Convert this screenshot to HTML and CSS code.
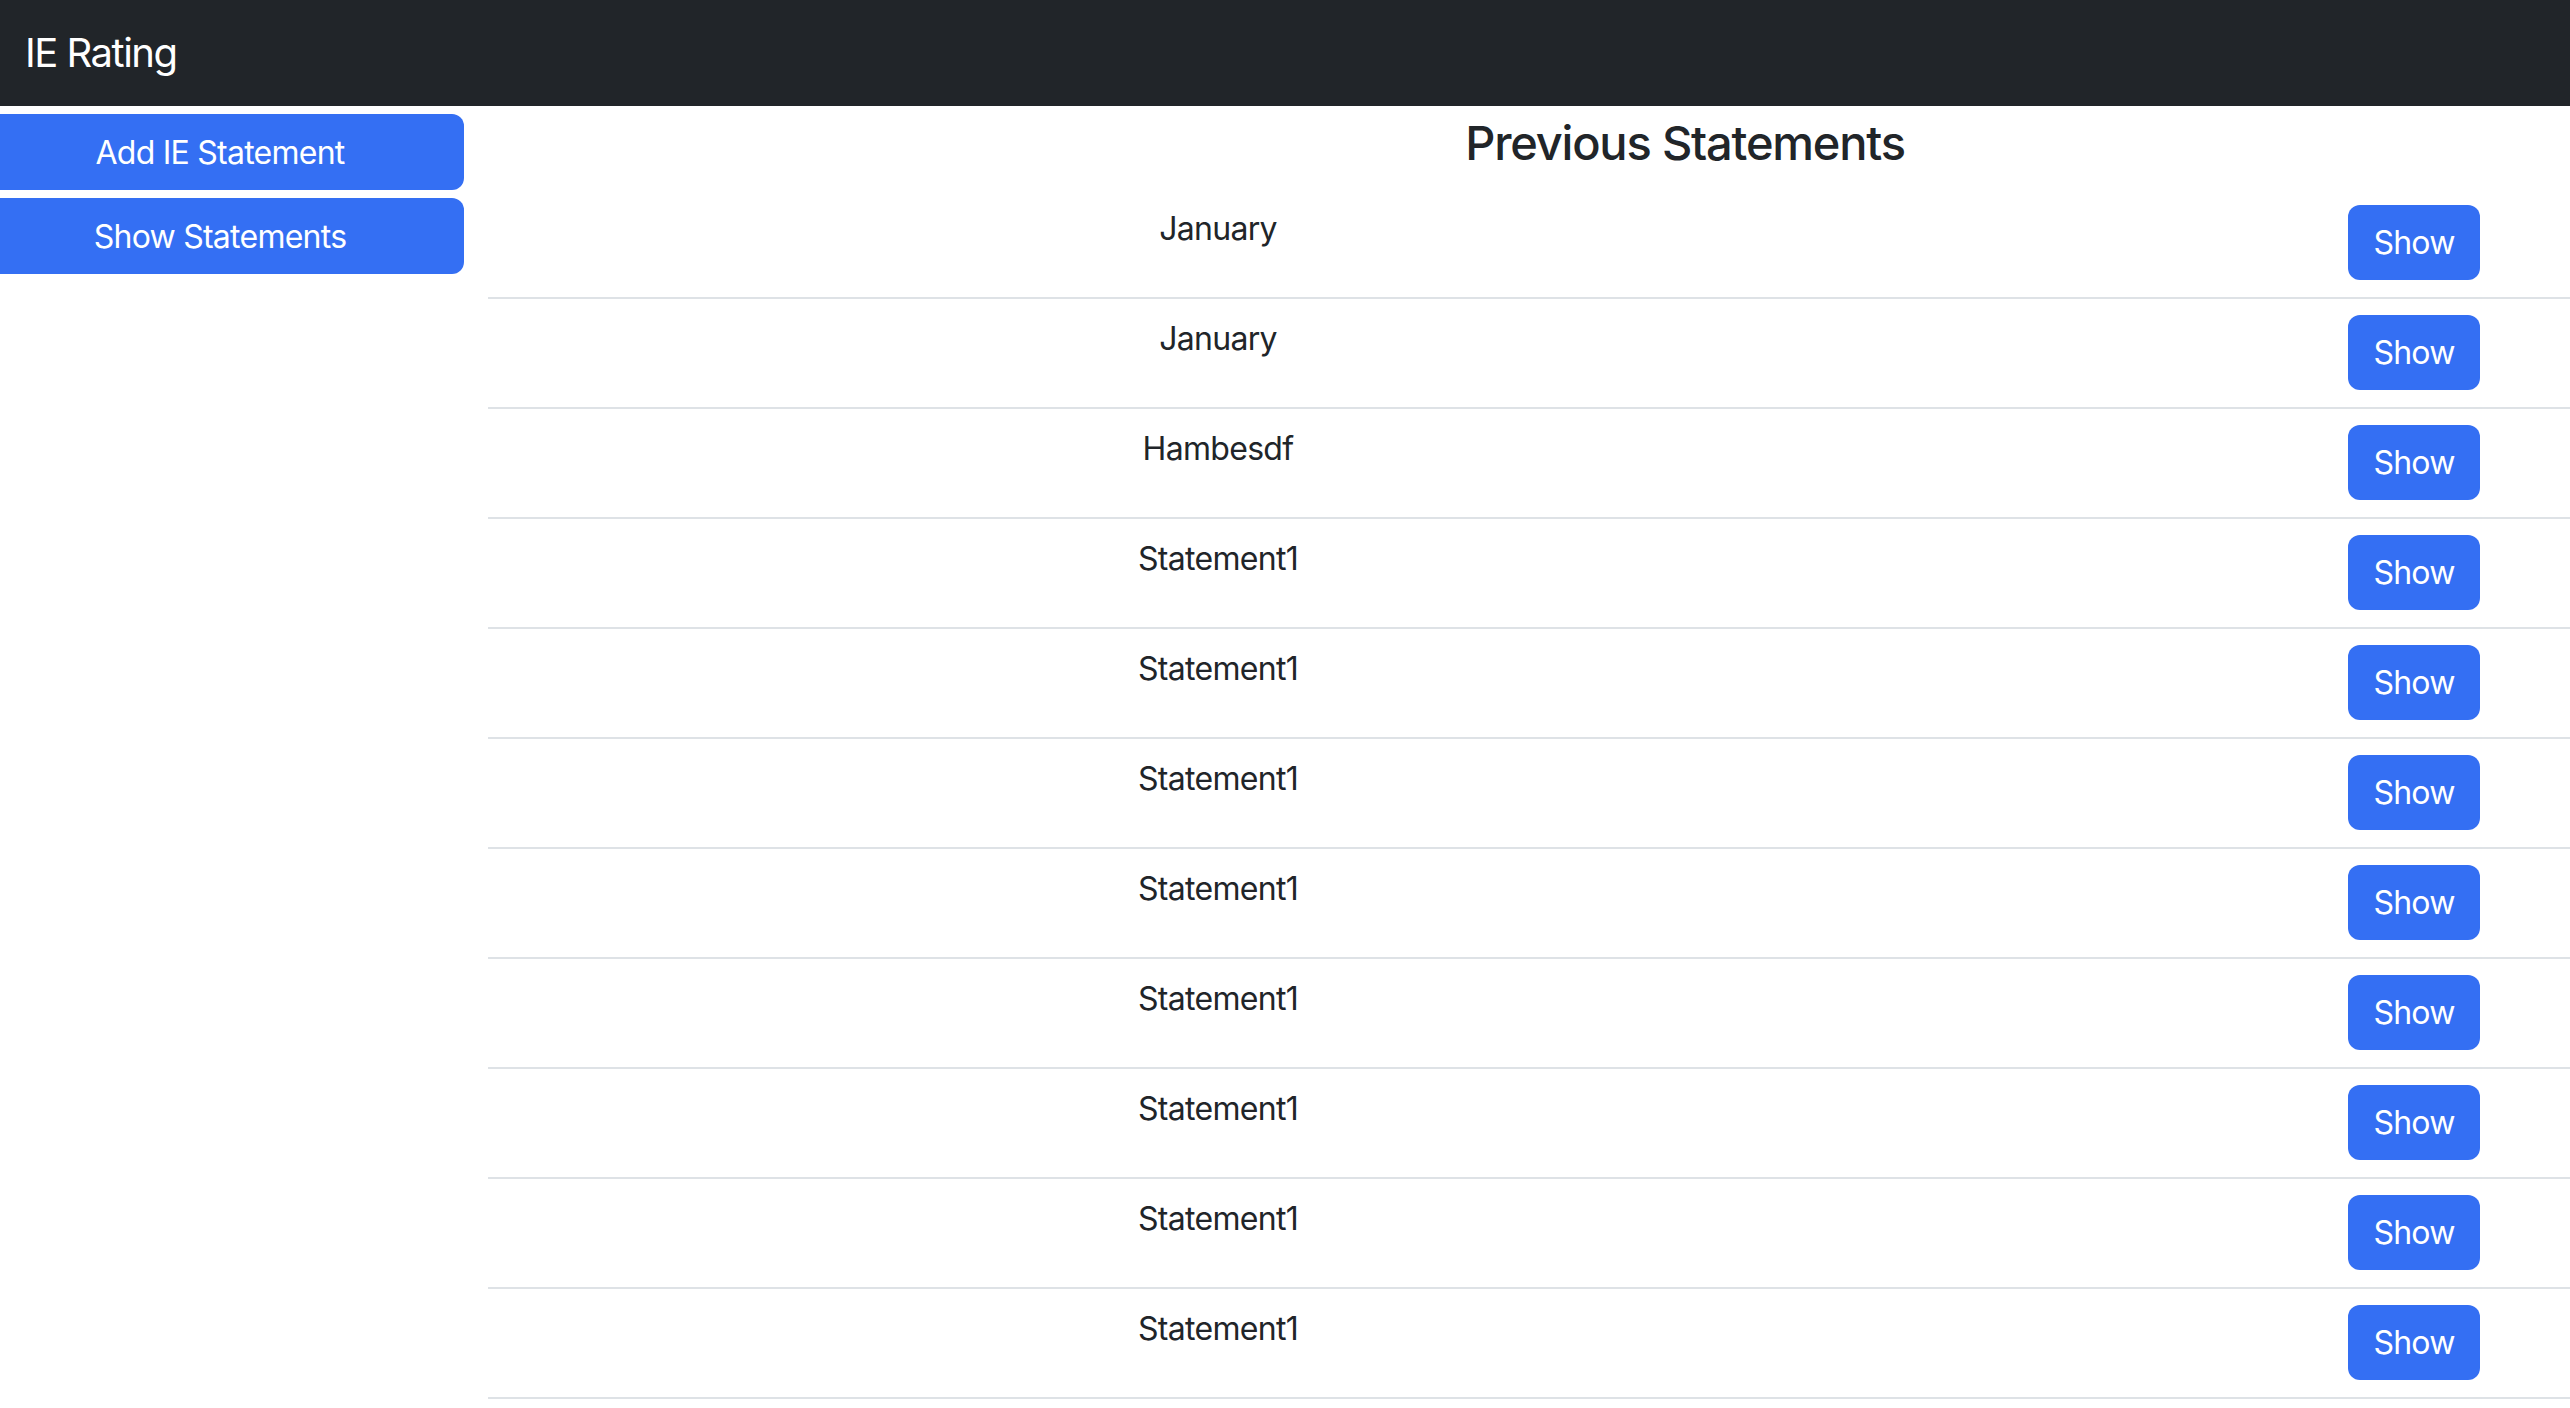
FILE: index.html
```html
<!DOCTYPE html>
<html lang="en">
<head>
<meta charset="utf-8">
<title>IE Rating</title>
<link rel="stylesheet" href="styles.css">
</head>
<body>
<header class="navbar"><span class="brand">IE Rating</span></header>
<div class="layout">
  <aside class="sidebar">
    <button class="side-btn">Add IE Statement</button>
    <button class="side-btn">Show Statements</button>
  </aside>
  <main class="content">
    <h4 class="title">Previous Statements</h4>
    <div class="list">
      <div class="row"><div class="name">January</div><div class="action"><button class="show-btn">Show</button></div></div>
      <div class="row"><div class="name">January</div><div class="action"><button class="show-btn">Show</button></div></div>
      <div class="row"><div class="name">Hambesdf</div><div class="action"><button class="show-btn">Show</button></div></div>
      <div class="row"><div class="name">Statement1</div><div class="action"><button class="show-btn">Show</button></div></div>
      <div class="row"><div class="name">Statement1</div><div class="action"><button class="show-btn">Show</button></div></div>
      <div class="row"><div class="name">Statement1</div><div class="action"><button class="show-btn">Show</button></div></div>
      <div class="row"><div class="name">Statement1</div><div class="action"><button class="show-btn">Show</button></div></div>
      <div class="row"><div class="name">Statement1</div><div class="action"><button class="show-btn">Show</button></div></div>
      <div class="row"><div class="name">Statement1</div><div class="action"><button class="show-btn">Show</button></div></div>
      <div class="row"><div class="name">Statement1</div><div class="action"><button class="show-btn">Show</button></div></div>
      <div class="row"><div class="name">Statement1</div><div class="action"><button class="show-btn">Show</button></div></div>
    </div>
  </main>
</div>
</body>
</html>
```

FILE: styles.css
```css
* { box-sizing: border-box; }
html, body {
  margin: 0;
  padding: 0;
  background: #fff;
  color: #212529;
  font-family: Inter, "Noto Sans", "Liberation Sans", sans-serif;
  overflow: hidden;
}
.navbar {
  height: 106px;
  background: #212529;
  display: flex;
  align-items: center;
  padding-left: 25px;
}
.brand {
  color: #fff;
  font-size: 40px;
  line-height: 48px;
  font-weight: 400;
  letter-spacing: -1.5px;
}
.layout {
  display: grid;
  grid-template-columns: 464px 1fr;
  column-gap: 24px;
}
.sidebar {
  display: flex;
  flex-direction: column;
  gap: 8px;
  padding-top: 8px;
}
.side-btn {
  height: 76px;
  border: none;
  border-radius: 0 12px 12px 0;
  background: #346ff3;
  color: #fff;
  font-family: inherit;
  font-size: 32px;
  padding: 0 24px 0 0;
  text-align: center;
  letter-spacing: -0.75px;
}
.content {
  display: flex;
  flex-direction: column;
}
.title {
  margin: 0 0 17px 0;
  padding: 8px 0 0 312px;
  font-size: 47px;
  line-height: 58px;
  font-weight: 500;
  text-align: center;
  letter-spacing: -1.2px;
}
.list {
  display: flex;
  flex-direction: column;
}
.row {
  display: grid;
  grid-template-columns: 1460px 1fr;
  border-bottom: 2px solid #dee2e6;
  padding: 16px 0 17px 0;
}
.name {
  font-size: 32px;
  line-height: 48px;
  padding-top: 0;
  text-align: center;
  letter-spacing: -0.7px;
}
.action {
  padding-left: 400px;
}
.show-btn {
  width: 132px;
  height: 75px;
  border: none;
  border-radius: 12px;
  background: #346ff3;
  color: #fff;
  font-family: inherit;
  font-size: 32px;
  letter-spacing: -0.8px;
  padding: 0;
}
```
